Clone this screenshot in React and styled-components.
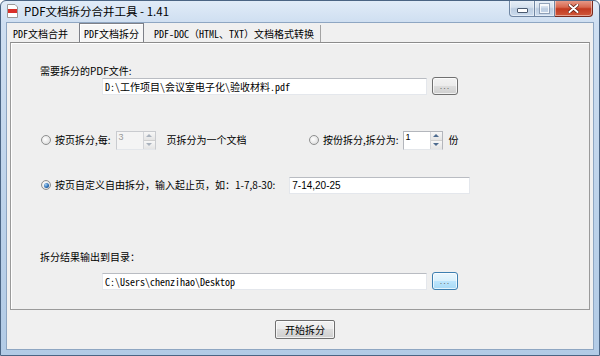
import React from 'react';
import styled, { createGlobalStyle } from 'styled-components';

const cjk = '"Noto Sans CJK SC", "Liberation Sans", sans-serif';
const mono = '"Noto Sans Mono CJK SC", "Liberation Mono", "Noto Sans CJK SC", monospace';

const GlobalStyle = createGlobalStyle`
  html, body {
    margin: 0;
    padding: 0;
  }
  body {
    width: 600px;
    height: 356px;
    overflow: hidden;
    background: #ffffff;
    font-family: ${cjk};
  }
`;

const Window = styled.div`
  width: 600px;
  height: 356px;
  box-sizing: border-box;
  display: flex;
  flex-direction: column;
  border: 1px solid #4b6584;
  border-radius: 6px 6px 0 0;
  background: linear-gradient(to bottom, #e1ecf8 0px, #cfdff1 21px, #bcd2ea 60%, #b2cbe6 100%);
  overflow: hidden;
`;

const TitleBar = styled.div`
  height: 21px;
  display: flex;
  align-items: flex-start;
  flex-shrink: 0;
`;

const TitleIcon = styled.svg`
  width: 13px;
  height: 14px;
  margin: 3px 0 0 5px;
`;

const TitleText = styled.span`
  margin: 3px 0 0 5px;
  font-family: "Noto Sans CJK SC", "Liberation Sans", sans-serif;
  font-size: 11.5px;
  line-height: 15px;
  color: #000;
`;

const Controls = styled.div`
  display: flex;
  margin: -1px 6px 0 auto;
  height: 18px;
`;

const CaptionButton = styled.div`
  height: 17px;
  width: ${p => p.w}px;
  box-sizing: border-box;
  display: flex;
  align-items: center;
  justify-content: center;
  border: 1px solid ${p => (p.close ? '#7a2a1c' : '#6f86a3')};
  border-top: none;
  border-left: ${p => (p.first ? '1px solid #6f86a3' : 'none')};
  border-radius: ${p => (p.first ? '0 0 0 4px' : p.close ? '0 0 4px 0' : '0')};
  background: ${p =>
    p.close
      ? 'linear-gradient(to bottom, #e9a08f 0%, #d8684f 45%, #c23a20 55%, #d0583a 100%)'
      : 'linear-gradient(to bottom, #e9f0f8 0%, #d5e1ee 45%, #bccde1 55%, #cbdcee 100%)'};
  box-shadow: inset 0 0 0 1px rgba(255, 255, 255, 0.45);
`;

const MinGlyph = styled.span`
  width: 9px;
  height: 3px;
  margin-top: 4px;
  background: #fff;
  border: 1px solid #4a5a70;
  border-radius: 1px;
`;

const MaxGlyph = styled.span`
  width: 7px;
  height: 6px;
  border: 1px solid #fff;
  border-top-width: 2px;
  outline: 1px solid #8193aa;
  opacity: 0.8;
`;

const Client = styled.div`
  flex: 1;
  margin: 0 5px 5px 5px;
  display: flex;
  flex-direction: column;
  background: #f0f0f0;
  border: 1px solid #8ea6c2;
`;

const TabStrip = styled.div`
  height: 19px;
  display: flex;
  align-items: flex-end;
  flex-shrink: 0;
`;

const Tab = styled.div`
  height: ${p => (p.active ? 19 : 17)}px;
  box-sizing: border-box;
  padding: 0 ${p => (p.active ? 4 : 6)}px;
  margin: ${p => (p.active ? '0 4px 0 5px' : '0')};
  display: flex;
  align-items: center;
  font-family: ${mono};
  font-size: 10px;
  color: #000;
  background: ${p => (p.active ? '#f7f7f7' : 'transparent')};
  border: ${p => (p.active ? '1px solid #7d8088' : 'none')};
  border-bottom: none;
  border-right: ${p => (p.active ? '1px solid #7d8088' : p.sep ? '1px solid #a3a3a3' : 'none')};
  box-shadow: ${p => (p.active ? 'inset 1px 1px 0 #ffffff' : 'none')};
  white-space: nowrap;
`;

const Panel = styled.div`
  flex: 1;
  margin: 0 3px;
  padding: 22px 0 0 0;
  display: flex;
  flex-direction: column;
  background: #efefef;
  border: 1px solid #9a9a9a;
  border-top-color: #8c8c8c;
  box-shadow: inset 1px 1px 0 #ffffff;
`;

const Label = styled.div`
  margin: ${p => p.mt || 0}px 0 0 29px;
  height: 12px;
  font-size: 10px;
  line-height: 12px;
  color: #000;
  white-space: nowrap;
`;

const FileRow = styled.div`
  margin: ${p => p.mt || 0}px 0 0 91px;
  height: 18px;
  display: flex;
  align-items: center;
  gap: 5px;
`;

const TextField = styled.div`
  width: ${p => p.w}px;
  height: 17px;
  box-sizing: border-box;
  padding: 0 2px;
  margin-left: ${p => p.ml || 0}px;
  display: flex;
  align-items: center;
  background: #ffffff;
  border: 1px solid #e4e7ec;
  border-top-color: #b9bcc2;
  font-family: ${p => (p.sans ? '"Liberation Sans", sans-serif' : mono)};
  font-size: 10px;
  color: #000;
  white-space: nowrap;
`;

const DotsButton = styled.div`
  width: 26px;
  height: 18px;
  box-sizing: border-box;
  display: flex;
  align-items: center;
  justify-content: center;
  border: 1px solid ${p => (p.focus ? '#3c7fb1' : '#707070')};
  border-radius: 3px;
  background: ${p =>
    p.focus
      ? 'linear-gradient(to bottom, #eaf6fd 0%, #d9f0fc 50%, #bee6fd 50%, #a7d9f5 100%)'
      : 'linear-gradient(to bottom, #f2f2f2 0%, #ebebeb 50%, #dddddd 50%, #cfcfcf 100%)'};
  box-shadow: inset 0 0 0 1px rgba(255, 255, 255, 0.7);
  font-family: "Liberation Sans", sans-serif;
  font-size: 9px;
  line-height: 9px;
  letter-spacing: 1px;
  color: #6a6a6a;
`;

const OptionRow = styled.div`
  margin: ${p => p.mt || 0}px 0 0 30px;
  height: ${p => p.h || 20}px;
  display: flex;
  align-items: center;
`;

const OptionGroup = styled.div`
  width: ${p => (p.w ? `${p.w}px` : 'auto')};
  display: flex;
  align-items: center;
  flex-shrink: 0;
`;

const Radio = styled.span`
  width: 10px;
  height: 10px;
  box-sizing: border-box;
  border-radius: 50%;
  border: 1px solid #8e8f8f;
  background: radial-gradient(circle at 40% 40%, #ffffff 0%, #e6e6e6 60%, #cfcfcf 100%);
  display: flex;
  align-items: center;
  justify-content: center;
  flex-shrink: 0;
  margin-right: 4px;
  &::after {
    content: '';
    display: ${p => (p.checked ? 'block' : 'none')};
    width: 5px;
    height: 5px;
    border-radius: 50%;
    background: radial-gradient(circle at 35% 35%, #a9d3f5 0%, #2c6fb5 55%, #17447c 100%);
  }
`;

const Text = styled.span`
  font-size: 10px;
  line-height: 12px;
  color: #000;
  white-space: nowrap;
  margin-left: ${p => p.ml || 0}px;
`;

const Spinner = styled.div`
  width: 40px;
  height: 19px;
  box-sizing: border-box;
  margin-left: ${p => p.ml || 0}px;
  display: flex;
  background: ${p => (p.disabled ? '#f4f4f4' : '#ffffff')};
  border: 1px solid ${p => (p.disabled ? '#c9cbcf' : '#b3b6bc')};
  border-bottom-color: #e3e6ea;
`;

const SpinValue = styled.span`
  flex: 1;
  padding: 0 0 0 2px;
  font-family: "Liberation Sans", sans-serif;
  font-size: 9px;
  line-height: 11px;
  color: ${p => (p.disabled ? '#9a9a9a' : '#000')};
`;

const SpinArrows = styled.div`
  width: 11px;
  display: flex;
  flex-direction: column;
  border-left: 1px solid #d3d5d9;
`;

const SpinArrow = styled.div`
  flex: 1;
  display: flex;
  align-items: center;
  justify-content: center;
  background: linear-gradient(to bottom, #f7f7f7, #e4e4e4);
  border-bottom: ${p => (p.up ? '1px solid #cfcfcf' : 'none')};
  &::after {
    content: '';
    width: 0;
    height: 0;
    border-left: 3px solid transparent;
    border-right: 3px solid transparent;
    ${p => (p.up ? 'border-bottom' : 'border-top')}: 3px solid ${p => (p.disabled ? '#a9b2bd' : '#4d6b8f')};
  }
`;

const Footer = styled.div`
  height: 39px;
  flex-shrink: 0;
  display: flex;
  align-items: center;
  justify-content: center;
  padding-left: 10px;
`;

const StartButton = styled.div`
  width: 60px;
  height: 19px;
  box-sizing: border-box;
  display: flex;
  align-items: center;
  justify-content: center;
  border: 1px solid #707070;
  border-radius: 2px;
  background: linear-gradient(to bottom, #f2f2f2 0%, #ebebeb 50%, #dddddd 50%, #cfcfcf 100%);
  box-shadow: inset 0 0 0 1px rgba(255, 255, 255, 0.7);
  font-size: 10px;
  color: #000;
`;

const SpinBox = ({ value, disabled, ml }) => (
  <Spinner disabled={disabled} ml={ml}>
    <SpinValue disabled={disabled}>{value}</SpinValue>
    <SpinArrows>
      <SpinArrow up disabled={disabled} />
      <SpinArrow disabled={disabled} />
    </SpinArrows>
  </Spinner>
);

export default function App() {
  return (
    <>
      <GlobalStyle />
      <Window>
        <TitleBar>
          <TitleIcon viewBox="0 0 13 14">
            <path d="M1.5 0.5 H9 L11.5 3 V13.5 H1.5 Z" fill="#ffffff" stroke="#9a9a9a" />
            <rect x="2" y="5" width="9" height="4" fill="#d9302a" />
          </TitleIcon>
          <TitleText>PDF文档拆分合并工具 - 1.41</TitleText>
          <Controls>
            <CaptionButton first w={26}>
              <MinGlyph />
            </CaptionButton>
            <CaptionButton w={20}>
              <MaxGlyph />
            </CaptionButton>
            <CaptionButton close w={38}>
              <svg width="11" height="9" viewBox="0 0 11 9">
                <path d="M1.5 1 L9.5 8 M9.5 1 L1.5 8" stroke="#5a1a10" strokeWidth="3.4" strokeLinecap="round" />
                <path d="M1.5 1 L9.5 8 M9.5 1 L1.5 8" stroke="#ffffff" strokeWidth="2" strokeLinecap="round" />
              </svg>
            </CaptionButton>
          </Controls>
        </TitleBar>

        <Client>
          <TabStrip>
            <Tab>PDF文档合并</Tab>
            <Tab active>PDF文档拆分</Tab>
            <Tab sep>PDF-DOC（HTML、TXT）文档格式转换</Tab>
          </TabStrip>

          <Panel>
            <Label>需要拆分的PDF文件:</Label>
            <FileRow>
              <TextField w={325}>D:\工作项目\会议室电子化\验收材料.pdf</TextField>
              <DotsButton>...</DotsButton>
            </FileRow>

            <OptionRow mt={35}>
              <OptionGroup w={268}>
                <Radio />
                <Text>按页拆分,每:</Text>
                <SpinBox value="3" disabled ml={5} />
                <Text ml={11}>页拆分为一个文档</Text>
              </OptionGroup>
              <OptionGroup>
                <Radio />
                <Text>按份拆分,拆分为:</Text>
                <SpinBox value="1" ml={4} />
                <Text ml={6}>份</Text>
              </OptionGroup>
            </OptionRow>

            <OptionRow mt={26} h={18}>
              <Radio checked />
              <Text>按页自定义自由拆分，输入起止页，如：1-7,8-30:</Text>
              <TextField w={181} sans ml={14}>7-14,20-25</TextField>
            </OptionRow>

            <Label mt={57}>拆分结果输出到目录：</Label>
            <FileRow mt={9}>
              <TextField w={325}>C:\Users\chenzihao\Desktop</TextField>
              <DotsButton focus>...</DotsButton>
            </FileRow>
          </Panel>

          <Footer>
            <StartButton>开始拆分</StartButton>
          </Footer>
        </Client>
      </Window>
    </>
  );
}
